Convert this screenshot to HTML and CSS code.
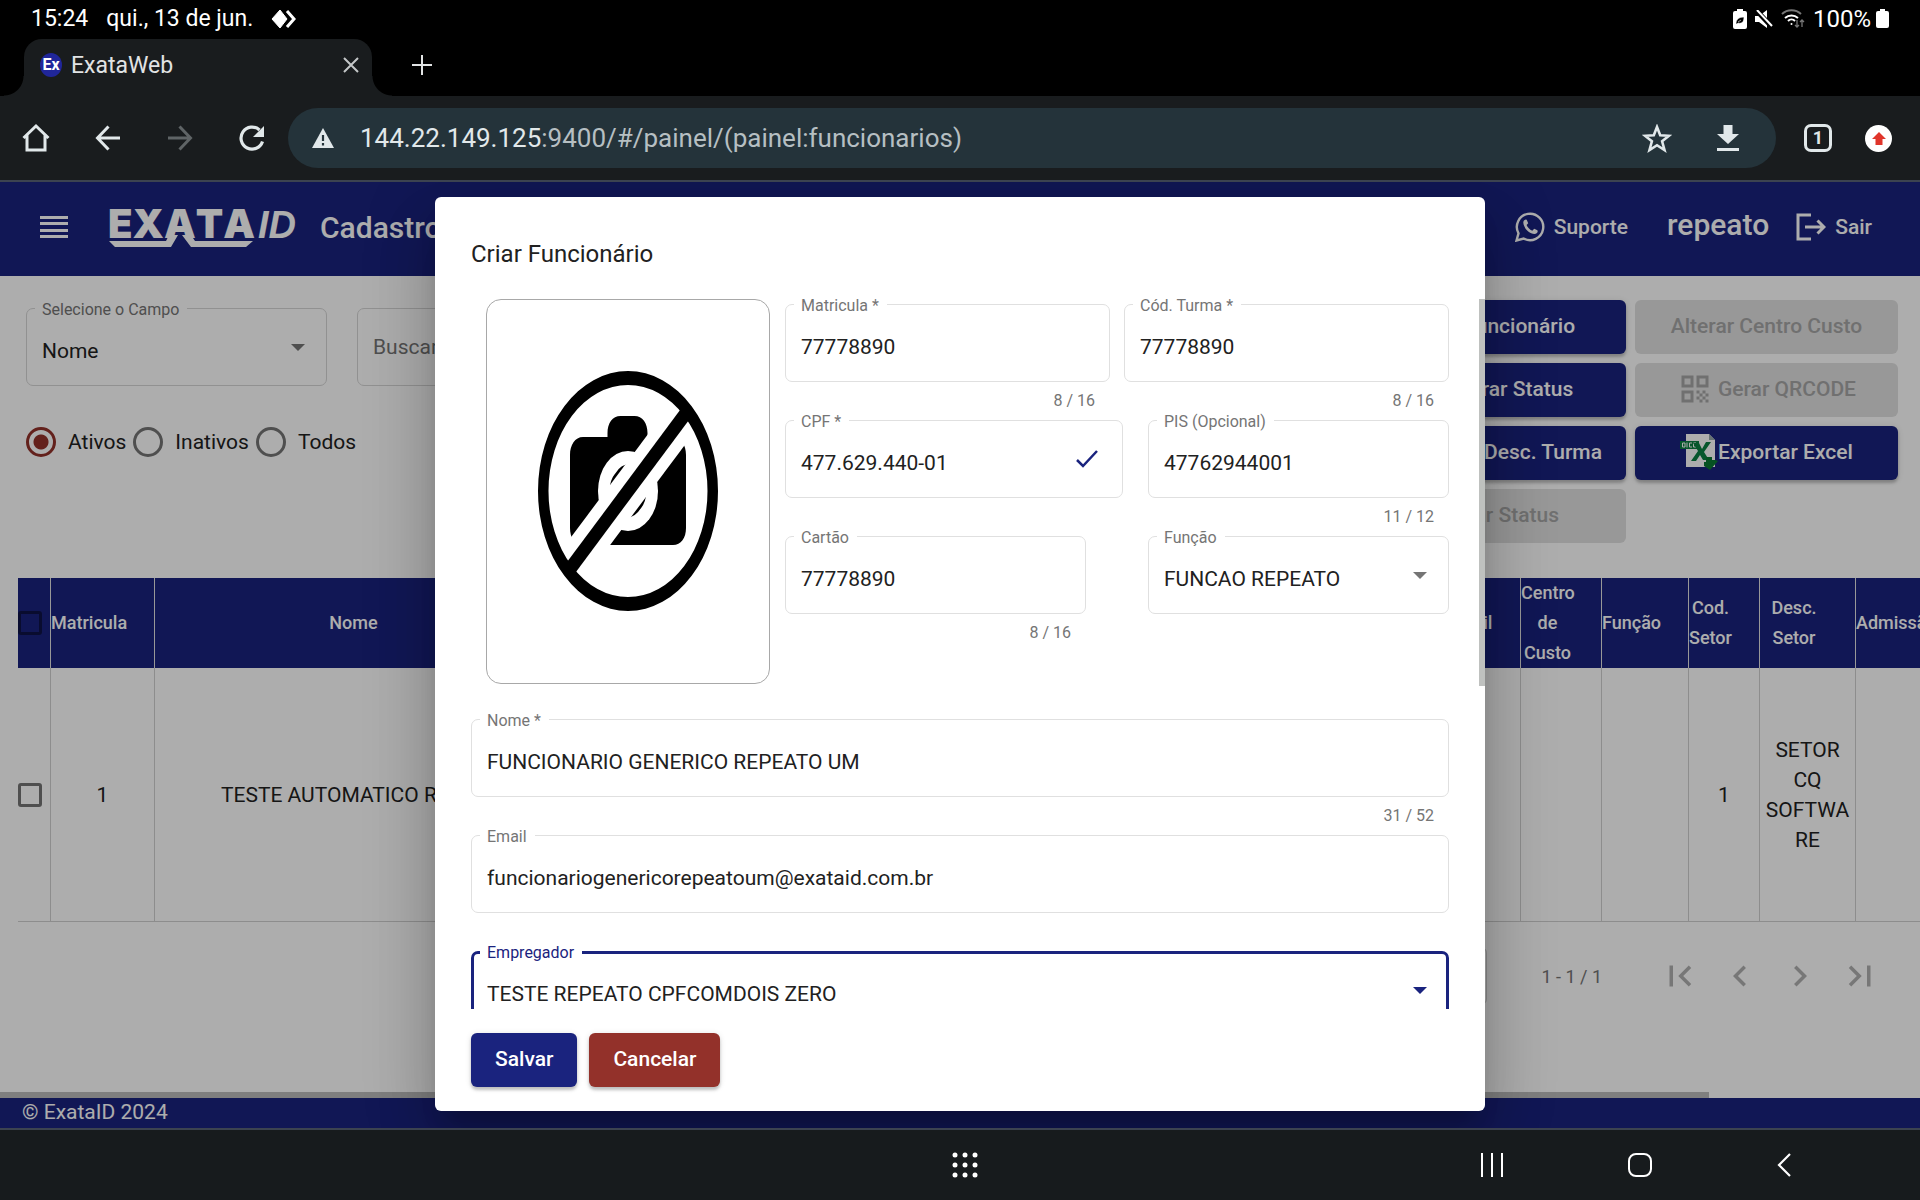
FILE: index.html
```html
<!DOCTYPE html>
<html lang="pt-BR">
<head>
<meta charset="utf-8">
<meta name="viewport" content="width=device-width, initial-scale=1">
<title>ExataWeb</title>
<link rel="stylesheet" href="styles.css">
</head>
<body>
<div class="status-bar">
  <span>15:24</span>
  <span>qui., 13 de jun.</span>
  <svg class="status-app" width="26" height="20" viewBox="0 0 26 20"><path d="M9 1l7 9-7 9-8-9z" fill="#fff" stroke="#fff" stroke-linejoin="round"/><path d="M16 2l7 8-7 8" fill="none" stroke="#fff" stroke-width="3"/></svg>
  <div class="status-icons">
    <svg width="14" height="20" viewBox="0 0 14 20"><path d="M4 0h6v2h2a2 2 0 0 1 2 2v14a2 2 0 0 1-2 2H2a2 2 0 0 1-2-2V4a2 2 0 0 1 2-2h2z" fill="#fff"/><path d="M3 15c0-4 2-7 8-7 0 5-2 7-6 6l-1 1zM5 13l3-2" fill="#000" stroke="#fff" stroke-width=".6"/></svg>
    <svg width="18" height="18" viewBox="0 0 18 18"><path d="M0 6h4l8-6v18l-8-6H0z" fill="#fff"/><path d="M1 0l16 17" stroke="#000" stroke-width="5"/><path d="M2 0l15 16" stroke="#fff" stroke-width="2"/></svg>
    <svg width="24" height="19" viewBox="0 0 24 19" fill="none" stroke="#fff" stroke-width="2"><path d="M1 5a14 14 0 0 1 19 0" stroke="#777"/><path d="M4 9a10 10 0 0 1 13 0M7 12a5 5 0 0 1 7 0"/><circle cx="10.500" cy="15" r="1" fill="#fff" stroke="none"/><path d="M16 11v7M14 16l2 2 2-2M21 18v-7M19 13l2-2 2 2" stroke="#777" stroke-width="1.300"/></svg>
    <span>100%</span>
    <svg width="13" height="19" viewBox="0 0 13 19"><path d="M4 0h5v2h2a2 2 0 0 1 2 2v13a2 2 0 0 1-2 2H2a2 2 0 0 1-2-2V4a2 2 0 0 1 2-2h2z" fill="#fff"/></svg>
  </div>
</div>

<div class="tab-strip">
  <div class="tab">
    <span class="favicon">Ex</span>
    <span class="tab-title">ExataWeb</span>
    <button class="icon-button" type="button" aria-label="Fechar guia"><svg width="16" height="16" viewBox="0 0 16 16" stroke="#c4c7c8" stroke-width="2"><path d="M1 1l14 14M15 1L1 15"/></svg></button>
  </div>
  <button class="icon-button new-tab" type="button" aria-label="Nova guia"><svg width="20" height="20" viewBox="0 0 20 20" stroke="#e1e3e4" stroke-width="2"><path d="M10 0v20M0 10h20"/></svg></button>
</div>

<div class="browser-bar">
  <div class="browser-nav">
    <button class="icon-button" type="button" aria-label="Início"><svg width="28" height="30" viewBox="0 0 28 30" fill="none" stroke="#e1e8ea" stroke-width="3"><path d="M1.500 15L14 3l12.500 12M5 12v15h18V12"/></svg></button>
    <button class="icon-button" type="button" aria-label="Voltar"><svg width="28" height="28" viewBox="0 0 28 28" fill="none" stroke="#e1e8ea" stroke-width="3"><path d="M14.500 2.500L3.500 14l11 11.500M3 14h23"/></svg></button>
    <button class="icon-button" type="button" aria-label="Avançar"><svg width="28" height="28" viewBox="0 0 28 28" fill="none" stroke="#5f6466" stroke-width="3"><path d="M13.500 2.500L24.500 14l-11 11.500M25 14H2"/></svg></button>
    <button class="icon-button" type="button" aria-label="Recarregar"><svg width="28" height="28" viewBox="0 0 28 28"><path d="M24.500 17.500A11 11 0 1 1 21.500 6" fill="none" stroke="#e1e8ea" stroke-width="3.200"/><path d="M26 2v11H15z" fill="#e1e8ea"/></svg></button>
  </div>
  <div class="address">
    <svg width="22" height="20" viewBox="0 0 22 20"><path d="M11 0l11 20H0z" fill="#e1e8ea"/><path d="M11 7v6M11 15v2.500" stroke="#24333a" stroke-width="2.200"/></svg>
    <div class="url"><span class="url-host">144.22.149.125</span>:9400/#/painel/(painel:funcionarios)</div>
    <button class="icon-button" type="button" aria-label="Favoritar"><svg width="30" height="29" viewBox="0 0 30 29"><path d="M15 3l3.200 8.300 8.800.500-6.900 5.500 2.400 8.700L15 21.200 7.500 26l2.400-8.700L3 11.800l8.800-.500z" fill="none" stroke="#e1e8ea" stroke-width="2.600"/></svg></button>
    <button class="icon-button" type="button" aria-label="Downloads"><svg width="22" height="26" viewBox="0 0 22 26" fill="#e1e8ea"><path d="M6.500 0h9v9H22L11 19 0 9h6.500zM0 23h22v3H0z"/></svg></button>
  </div>
  <button class="tab-count" type="button">1</button>
  <button class="update-badge" type="button" aria-label="Atualizar"><svg width="14" height="13" viewBox="0 0 14 13"><path d="M7 0l7 7h-3.500v6h-7V7H0z" fill="#e0352b"/></svg></button>
</div>

<div class="web-page">
  <header class="app-header">
    <button class="icon-button" type="button" aria-label="Menu"><svg width="28" height="22" viewBox="0 0 28 22" fill="#fff"><path d="M0 0h28v3H0zM0 6h28v3H0zM0 13h28v3H0zM0 19h28v3H0z"/></svg></button>
    <div class="logo">
      <div class="logo-text"><span class="logo-name">EXATA</span><span class="logo-id">ID</span></div>
      <svg class="logo-line" width="146" height="12" viewBox="0 0 146 12" fill="#fff"><path d="M1 6h57l3-6h9l-7 12H7zM74 0h9l4 6h58l-7 6H83z"/></svg>
    </div>
    <h1 class="app-title">Cadastro de Funcionários</h1>
    <a class="header-link support" href="#suporte"><svg width="30" height="30" viewBox="0 0 30 30"><path d="M1.500 28.500l2-7.200A13.200 13.200 0 1 1 8.700 26.500z" fill="none" stroke="#fff" stroke-width="2.400"/><path d="M10.700 7.500c-1.500.300-2.500 1.800-2.400 3.300.600 5.700 6 10.800 11.200 11.200 1.600 0 3-1 3.200-2.500l-.300-1.200-3.200-1.500-1.900 1.900c-2.700-1-4.800-3.200-5.700-5.600l1.600-1.900-1.500-3.500z" fill="#fff"/></svg>Suporte</a>
    <span class="user-name">repeato</span>
    <a class="header-link" href="#sair"><svg width="30" height="28" viewBox="0 0 30 28" fill="none" stroke="#fff" stroke-width="3"><path d="M15 2H2v24h13M9 14h19M21.500 7.500L28 14l-6.500 6.500"/></svg>Sair</a>
  </header>

  <main class="page-body">
    <section class="toolbar">
      <div class="filters">
        <div class="filter-row">
          <div class="field-box filter-select">
            <label class="field-label" for="campo">Selecione o Campo</label>
            <select id="campo"><option>Nome</option></select>
            <svg class="arrow" width="14" height="7" viewBox="0 0 14 7"><path d="M0 0h14L7 7z"/></svg>
          </div>
          <div class="field-box filter-search"><input type="text" placeholder="Buscar" aria-label="Buscar"></div>
        </div>
        <div class="radio-row">
          <label class="radio"><input type="radio" name="situacao" checked>Ativos</label>
          <label class="radio"><input type="radio" name="situacao">Inativos</label>
          <label class="radio"><input type="radio" name="situacao">Todos</label>
        </div>
      </div>
      <div class="action-grid">
        <button class="button primary" type="button">Criar Funcionário</button>
        <button class="button" type="button" disabled>Alterar Centro Custo</button>
        <button class="button primary" type="button">Cadastrar Status</button>
        <button class="button with-icon" type="button" disabled><svg width="36" height="36" viewBox="0 0 24 24" fill="currentColor"><path d="M3 11h8V3H3v8zm2-6h4v4H5V5zM3 21h8v-8H3v8zm2-6h4v4H5v-4zM13 3v8h8V3h-8zm6 6h-4V5h4v4zM19 19h2v2h-2zM13 13h2v2h-2zM15 15h2v2h-2zM13 17h2v2h-2zM15 19h2v2h-2zM17 17h2v2h-2zM17 13h2v2h-2zM19 15h2v2h-2z"/></svg>Gerar QRCODE</button>
        <button class="button primary" type="button">Cadastrar Desc. Turma</button>
        <button class="button primary" type="button"><svg width="38" height="38" viewBox="0 0 38 38"><path d="M6 1h23l6 6v27H6z" fill="#fff"/><path d="M29 1v6h6z" fill="#9aa"/><path d="M0 8h19v8H0z" fill="#0b8043"/><path d="M2.500 10H5v4H2.500zM7 9.500v5M12 10H9.500v4H12M16 10h-2.500v4H16" stroke="#fff" stroke-width="1" fill="none"/><path d="M13 10h6l3 6 4-7h5l-7 10 5 8h-6l-3-5-4 6h-5l7-10z" fill="#0b8043"/><path d="M26 24h6v3h3l3 1-8 9-6-4v-4h2z" fill="#0a7a33"/></svg>Exportar Excel</button>
        <button class="button" type="button" disabled>Alterar Status</button>
      </div>
    </section>

    <div class="table-wrap">
      <table class="staff-table">
        <colgroup><col class="c-check"><col class="c-id"><col class="c-name"><col class="c-doc"><col class="c-doc"><col class="c-doc"><col class="c-company"><col class="c-mail"><col class="c-cost"><col class="c-role"><col class="c-code"><col class="c-sector"><col class="c-id"><col></colgroup>
        <thead>
          <tr><th class="check-cell"><input type="checkbox" aria-label="Selecionar todos"></th><th>Matricula</th><th>Nome</th><th>CPF</th><th>PIS</th><th>Cartão</th><th>Empregador</th><th>Email</th><th>Centro de Custo</th><th>Função</th><th>Cod. Setor</th><th>Desc. Setor</th><th>Admissão</th><th>Status</th></tr>
        </thead>
        <tbody>
          <tr><td class="check-cell"><input type="checkbox" aria-label="Selecionar 1"></td><td>1</td><td>TESTE AUTOMATICO REPEATO</td><td></td><td></td><td></td><td></td><td></td><td></td><td></td><td>1</td><td>SETOR CQ SOFTWARE</td><td></td><td></td></tr>
        </tbody>
      </table>
    </div>

    <nav class="paginator" aria-label="Paginação">
      <select class="page-size" aria-label="Itens por página"><option>10</option></select>
      <span class="page-range">1 - 1 / 1</span>
      <button class="page-button" type="button" aria-label="Primeira" disabled><svg width="42" height="42" viewBox="0 0 24 24"><path d="M18.410 16.590L13.820 12l4.590-4.590L17 6l-6 6 6 6zM6 6h2v12H6z"/></svg></button>
      <button class="page-button" type="button" aria-label="Anterior" disabled><svg width="42" height="42" viewBox="0 0 24 24"><path d="M15.410 7.410L14 6l-6 6 6 6 1.410-1.410L10.830 12z"/></svg></button>
      <button class="page-button" type="button" aria-label="Próxima" disabled><svg width="42" height="42" viewBox="0 0 24 24"><path d="M10 6L8.590 7.410 13.170 12l-4.580 4.590L10 18l6-6z"/></svg></button>
      <button class="page-button" type="button" aria-label="Última" disabled><svg width="42" height="42" viewBox="0 0 24 24"><path d="M5.590 7.410L10.180 12l-4.590 4.590L7 18l6-6-6-6zM16 6h2v12h-2z"/></svg></button>
    </nav>
    <div class="page-scroll"></div>
  </main>
  <footer class="app-footer">© ExataID 2024</footer>

  <div class="backdrop">
    <form class="dialog" role="dialog" aria-labelledby="dialog-title">
      <h2 class="dialog-title" id="dialog-title">Criar Funcionário</h2>
      <div class="dialog-content">
        <div class="identity">
          <div class="photo">
            <svg width="180" height="240" viewBox="0 0 180 240">
              <path d="M45 66h24.500V62c0-10 5-17 13-17h14c8 0 13 7 13 17v4H135c8 0 13 8 13 18v73c0 10-5 17-13 17H45c-8 0-13-7-13-17V84c0-10 5-18 13-18z"/>
              <ellipse cx="90" cy="120" rx="30" ry="40" fill="#fff"/>
              <ellipse cx="90" cy="120" rx="21" ry="28"/>
              <path d="M158 29L22 211" stroke="#fff" stroke-width="36"/>
              <path d="M71.500 137c-6-12-6-27 2-37 5-8 12-12 20-11M108.500 103c6 12 6 27-2 37-5 8-12 12-20 11" fill="none" stroke="#fff" stroke-width="9"/>
              <path d="M148 42L32 198" stroke="#000" stroke-width="13"/>
              <path fill-rule="evenodd" d="M90 0a90 120 0 0 1 0 240a90 120 0 0 1 0-240zM90 14a79.500 106 0 0 0 0 212a79.500 106 0 0 0 0-212z"/>
            </svg>
          </div>
          <div class="identity-fields">
            <div class="field-row even">
              <div class="field"><div class="field-box"><label class="field-label" for="matricula">Matricula *</label><input id="matricula" type="text" value="77778890"></div><div class="hint">8 / 16</div></div>
              <div class="field"><div class="field-box"><label class="field-label" for="turma">Cód. Turma *</label><input id="turma" type="text" value="77778890"></div><div class="hint">8 / 16</div></div>
            </div>
            <div class="field-row">
              <div class="field wide"><div class="field-box"><label class="field-label" for="cpf">CPF *</label><input id="cpf" type="text" value="477.629.440-01"><svg class="valid" width="22" height="18" viewBox="0 0 22 18"><path d="M1 10l6 6L21 1" fill="none" stroke="#1a237e" stroke-width="2.500"/></svg></div></div>
              <div class="field"><div class="field-box"><label class="field-label" for="pis">PIS (Opcional)</label><input id="pis" type="text" value="47762944001"></div><div class="hint">11 / 12</div></div>
            </div>
            <div class="field-row">
              <div class="field"><div class="field-box"><label class="field-label" for="cartao">Cartão</label><input id="cartao" type="text" value="77778890"></div><div class="hint">8 / 16</div></div>
              <div class="field"><div class="field-box"><label class="field-label" for="funcao">Função</label><select id="funcao"><option>FUNCAO REPEATO</option></select><svg class="arrow" width="14" height="7" viewBox="0 0 14 7"><path d="M0 0h14L7 7z"/></svg></div></div>
            </div>
          </div>
        </div>
        <div class="field"><div class="field-box"><label class="field-label" for="nome">Nome *</label><input id="nome" type="text" value="FUNCIONARIO GENERICO REPEATO UM"></div><div class="hint">31 / 52</div></div>
        <div class="field"><div class="field-box"><label class="field-label" for="email">Email</label><input id="email" type="email" value="funcionariogenericorepeatoum@exataid.com.br"></div></div>
        <div class="field"><div class="field-box focused"><label class="field-label" for="empregador">Empregador</label><select id="empregador"><option>TESTE REPEATO CPFCOMDOIS ZERO</option></select><svg class="arrow" width="14" height="7" viewBox="0 0 14 7"><path d="M0 0h14L7 7z"/></svg></div></div>
        <div class="dialog-scroll"></div>
      </div>
      <div class="dialog-actions">
        <button class="button primary" type="button">Salvar</button>
        <button class="button danger" type="button">Cancelar</button>
      </div>
    </form>
  </div>
</div>

<div class="system-nav">
  <button class="icon-button" type="button" aria-label="Aplicativos"><svg width="26" height="26" viewBox="0 0 26 26" fill="#fff"><circle cx="3" cy="3" r="2.500"/><circle cx="13" cy="3" r="2.500"/><circle cx="23" cy="3" r="2.500"/><circle cx="3" cy="13" r="2.500"/><circle cx="13" cy="13" r="2.500"/><circle cx="23" cy="13" r="2.500"/><circle cx="3" cy="23" r="2.500"/><circle cx="13" cy="23" r="2.500"/><circle cx="23" cy="23" r="2.500"/></svg></button>
  <div class="system-keys">
    <button class="icon-button" type="button" aria-label="Recentes"><svg width="22" height="24" viewBox="0 0 22 24" stroke="#fff" stroke-width="2"><path d="M1 0v24M11 0v24M21 0v24"/></svg></button>
    <button class="icon-button" type="button" aria-label="Tela inicial"><svg width="24" height="24" viewBox="0 0 24 24"><rect x="1" y="1" width="22" height="22" rx="7" fill="none" stroke="#fff" stroke-width="2"/></svg></button>
    <button class="icon-button" type="button" aria-label="Voltar"><svg width="14" height="24" viewBox="0 0 14 24"><path d="M13 1L2 12l11 11" fill="none" stroke="#fff" stroke-width="2.200"/></svg></button>
  </div>
</div>
</body>
</html>
```
FILE: styles.css
```css
* { box-sizing: border-box; }

body {
  margin: 0;
  height: 100vh;
  display: flex;
  flex-direction: column;
  overflow: hidden;
  background: #000;
  font-family: Roboto, "Liberation Sans", sans-serif;
  font-size: 21px;
  color: #212121;
}

button, input, select { font: inherit; color: inherit; margin: 0; }
svg { display: block; flex: none; }

.icon-button {
  display: flex;
  align-items: center;
  justify-content: center;
  padding: 0;
  border: 0;
  background: none;
}

/* Android status bar */
.status-bar {
  flex: none;
  display: flex;
  align-items: center;
  gap: 18px;
  height: 39px;
  padding: 0 31px 2px;
  color: #fff;
  font-size: 23px;
  line-height: 28px;
}
.status-icons { display: flex; align-items: center; gap: 8px; margin-left: auto; font-size: 24px; }
.status-icons span { margin-right: -3px; }

/* Browser */
.tab-strip { flex: none; display: flex; align-items: stretch; height: 57px; padding-left: 24px; }
.tab {
  position: relative;
  display: flex;
  align-items: center;
  width: 348px;
  padding: 0 13px 5px 16px;
  border-radius: 18px 18px 0 0;
  background: #191c1e;
  color: #e1e3e4;
  font-size: 23px;
}
.tab::before, .tab::after {
  content: "";
  position: absolute;
  bottom: 0;
  width: 20px;
  height: 20px;
}
.tab::before { right: 100%; background: radial-gradient(circle at 0 0, #000 19px, #191c1e 20px); }
.tab::after { left: 100%; background: radial-gradient(circle at 100% 0, #000 19px, #191c1e 20px); }
.favicon {
  width: 22px;
  height: 24px;
  border-radius: 50%;
  background: #20269a;
  color: #fff;
  font-size: 16px;
  font-weight: 700;
  line-height: 24px;
  text-align: center;
}
.tab-title { flex: 1; padding-left: 9px; }
.new-tab { margin: 0 0 6px 40px; }

.browser-bar {
  flex: none;
  display: flex;
  align-items: center;
  height: 86px;
  padding: 0 28px 0 22px;
  border-bottom: 2px solid #3c4350;
  background: #191c1e;
}
.browser-nav { display: flex; align-items: center; gap: 44px; margin-right: 22px; }
.address {
  flex: 1;
  display: flex;
  align-items: center;
  height: 60px;
  padding: 0 37px 0 24px;
  border-radius: 30px;
  background: #24333a;
}
.address .icon-button { margin-left: 45px; }
.url { flex: 1; padding-left: 26px; color: #b6bfc2; font-size: 26px; }
.url-host { color: #e1e8ea; }
.tab-count {
  width: 28px;
  height: 28px;
  margin: 0 33px 0 28px;
  padding: 0;
  border: 3px solid #e1e8ea;
  border-radius: 7px;
  background: none;
  color: #e1e8ea;
  font-size: 18px;
  font-weight: 700;
  line-height: 22px;
}
.update-badge {
  display: flex;
  align-items: center;
  justify-content: center;
  width: 27px;
  height: 27px;
  padding: 0;
  border: 0;
  border-radius: 50%;
  background: #fff;
}

/* Application */
.web-page {
  position: relative;
  flex: 1;
  min-height: 0;
  display: flex;
  flex-direction: column;
  overflow: hidden;
  background: #fff;
}
.app-header {
  flex: none;
  display: flex;
  align-items: center;
  height: 94px;
  padding: 0 48px 4px 40px;
  background: #1a237e;
  color: #fff;
}
.logo { display: grid; margin: 0 24px 0 40px; }
.logo-text { grid-area: 1 / 1; display: flex; align-items: baseline; height: 40px; line-height: 34px; }
.logo-name { width: 150px; font-family: Inter, sans-serif; font-size: 40px; font-weight: 900; font-kerning: none; }
.logo-id { font-family: "Liberation Sans", sans-serif; font-size: 38px; font-weight: 700; font-style: italic; }
.logo-line { grid-area: 1 / 1; align-self: end; }
.app-title, .user-name { margin: 0; font-size: 30px; font-weight: 500; }
.app-title { flex: 1; }
.header-link {
  display: flex;
  align-items: center;
  gap: 9px;
  color: inherit;
  font-weight: 500;
  text-decoration: none;
}
.user-name { margin: 0 27px 6px 39px; }

.page-body { flex: 1; min-height: 0; display: flex; flex-direction: column; }
.toolbar { display: flex; justify-content: space-between; padding: 24px 22px 35px 26px; }
.filters { padding-top: 8px; }
.filter-row { display: flex; gap: 30px; }
.filter-select { width: 301px; }
.filter-search { width: 400px; }
.filter-search input::placeholder { color: #757575; opacity: 1; }
.radio-row { display: flex; gap: 7px; margin-top: 41px; }
.radio { display: flex; align-items: center; gap: 12px; line-height: 28px; }
.radio input {
  appearance: none;
  width: 30px;
  height: 30px;
  border: 3px solid #757575;
  border-radius: 50%;
}
.radio input:checked {
  border-color: #93312a;
  background: radial-gradient(circle, #93312a 7px, transparent 8px);
}

.action-grid { display: grid; grid-template-columns: 263px 263px; grid-auto-rows: 54px; gap: 9px; }
.button {
  display: flex;
  align-items: center;
  justify-content: center;
  height: 54px;
  padding: 0 24px 2px;
  border: 0;
  border-radius: 6px;
  color: #fff;
  font-weight: 500;
  white-space: nowrap;
  box-shadow: 0 3px 3px rgba(0, 0, 0, .2), 0 1px 6px rgba(0, 0, 0, .12);
}
.button:disabled { background: #e0e0e0; color: #a6a6a6; box-shadow: none; }
.with-icon { gap: 5px; }
.primary { background: #1a237e; }
.danger { background: #93312a; }

.table-wrap { margin-left: 18px; overflow: hidden; }
.staff-table { width: 2135px; table-layout: fixed; border-collapse: separate; border-spacing: 0; text-align: center; line-height: 30px; }
.c-check { width: 33px; }
.c-id { width: 104px; }
.c-name { width: 425px; }
.c-doc { width: 200px; }
.c-company { width: 267px; }
.c-mail { width: 74px; }
.c-cost { width: 81px; }
.c-role { width: 87px; }
.c-code { width: 71px; }
.c-sector { width: 96px; }
.staff-table th {
  height: 90px;
  padding: 0 27px 0 0;
  border-right: 1px solid #e0e0e0;
  background: #1a237e;
  color: #fff;
  font-size: 18px;
  font-weight: 500;
}
.staff-table td {
  height: 254px;
  padding: 0 4px;
  border-right: 1px solid #d0d0d0;
  border-bottom: 1px solid #d0d0d0;
  overflow-wrap: anywhere;
}
.staff-table .check-cell { padding: 0; text-align: left; }
.check-cell input {
  appearance: none;
  display: block;
  width: 24px;
  height: 24px;
  border: 3px solid #757575;
  border-radius: 3px;
}
th.check-cell input { border-color: #0e1346; }

.paginator { display: flex; align-items: center; justify-content: flex-end; height: 84px; margin-top: 12px; padding-right: 30px; }
.page-size {
  appearance: none;
  width: 126px;
  height: 58px;
  padding: 0 16px;
  border: 1px solid #d0d0d0;
  border-radius: 6px;
  background: none;
}
.page-range { margin: 0 48px 0 54px; color: #757575; font-size: 18px; }
.page-button {
  display: flex;
  align-items: center;
  justify-content: center;
  width: 60px;
  height: 60px;
  padding: 0;
  border: 0;
  background: none;
}
.page-button svg { fill: #b0b0b0; }
.page-scroll { width: 89%; height: 6px; margin-top: auto; background: #bcbcbc; }
.app-footer { flex: none; height: 30px; padding-left: 22px; background: #1a237e; color: #fff; line-height: 28px; }

/* Outlined fields */
.field-box {
  position: relative;
  display: flex;
  align-items: center;
  height: 78px;
  border: 1px solid #e0e0e0;
  border-radius: 7px;
}
.field-label {
  position: absolute;
  top: -9px;
  left: 8px;
  padding: 0 8px 0 7px;
  background: #fff;
  color: #757575;
  font-size: 16px;
  line-height: 20px;
}
.field-box input, .field-box select {
  appearance: none;
  flex: 1;
  min-width: 0;
  height: 100%;
  padding: 8px 0 0 15px;
  border: 0;
  outline: 0;
  background: none;
}
.field-box.filter-search input { padding-top: 0; }
.arrow { margin-right: 21px; fill: #757575; }
.valid { margin-right: 24px; }
.focused { border: 3px solid #1a237e; }
.focused .field-label { top: -11px; left: 6px; color: #1a237e; }
.focused select { padding-left: 13px; }
.focused .arrow { margin-right: 19px; fill: #1a237e; }
.filter-row .field-box { border-color: #d6d6d6; }
.field { height: 116px; flex: none; }
.hint { padding-right: 15px; color: #757575; font-size: 16px; line-height: 37px; text-align: right; }

/* Dialog */
.backdrop {
  position: absolute;
  inset: 0;
  display: flex;
  justify-content: center;
  padding: 15px 0 17px;
  background: rgba(0, 0, 0, .32);
}
.dialog {
  display: flex;
  flex-direction: column;
  width: 1050px;
  max-width: 100%;
  border-radius: 6px;
  background: #fff;
  box-shadow: 0 16px 22px -10px rgba(0, 0, 0, .2), 0 36px 57px 4px rgba(0, 0, 0, .14), 0 13px 69px 12px rgba(0, 0, 0, .12);
}
.dialog-title { margin: 0; padding: 43px 36px 25px; font-size: 24px; font-weight: 400; line-height: 28px; }
.dialog-content { position: relative; flex: 1; min-height: 0; padding: 6px 36px 0; overflow: hidden; display: flex; flex-direction: column; }
.identity { flex: none; display: flex; gap: 15px; margin: 0 0 35px 15px; }
.photo {
  flex: none;
  display: flex;
  align-items: center;
  justify-content: center;
  width: 284px;
  height: 385px;
  padding-bottom: 2px;
  border: 1px solid #a8a8a8;
  border-radius: 15px;
}
.identity-fields { flex: 1; padding-top: 5px; }
.field-row { display: flex; justify-content: space-between; }
.field-row .field { width: 301px; }
.field-row .wide { width: 338px; }
.even { gap: 14px; }
.even .field { flex: 1; width: auto; }
.dialog-scroll { position: absolute; top: 6px; right: 0; width: 6px; height: 54%; background: #bfc1bf; }
.dialog-actions { display: flex; gap: 12px; padding: 24px 36px; }

/* Android navigation */
.system-nav {
  flex: none;
  display: grid;
  grid-template-columns: 1fr auto 1fr;
  align-items: center;
  height: 72px;
  padding: 0 129px 0 139px;
  border-top: 2px solid #3c4350;
  background: #171b1d;
}
.system-nav > .icon-button { grid-column: 2; }
.system-keys { display: flex; justify-content: flex-end; gap: 125px; }
```
